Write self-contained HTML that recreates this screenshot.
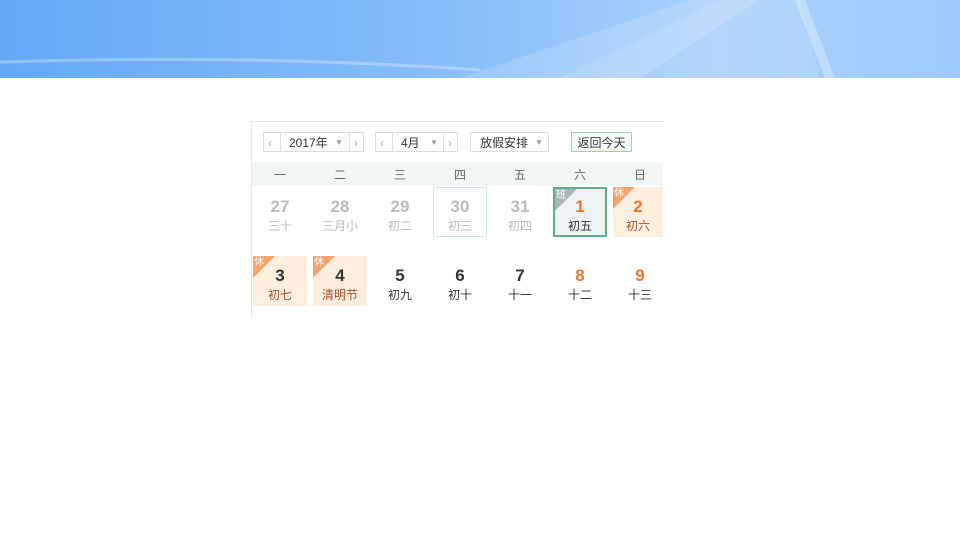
<!DOCTYPE html>
<html><head><meta charset="utf-8"><style>
body{margin:0;width:960px;height:540px;background:#fff;position:relative;overflow:hidden;font-family:"Liberation Sans","Noto Sans CJK SC",sans-serif}
.banner{position:absolute;left:0;top:0;width:960px;height:78px;background:linear-gradient(90deg,#64a8f6 0%,#86bdf9 45%,#a9d1fb 75%,#9ccbfb 100%);overflow:hidden}
.a{position:absolute}
.box{position:absolute;border:1px solid #dcdcdc;height:20px;top:132px;font-size:12px;line-height:20px;color:#333;box-sizing:border-box}
.cell{position:absolute;width:54px;height:50px;text-align:center;box-sizing:border-box}
.cell b{display:block;font-size:17px;margin-top:10px;line-height:20px}
.cell span{display:block;font-size:12px;line-height:18px}
.g b{color:#bbb}.g span{color:#bbb}
.k b{color:#333}.k span{color:#333}
.o b{color:#e8772e}
.h{background:#fdeee0}
.h span{color:#a0522d}
.tag{position:absolute;left:0;top:0;width:0;height:0;border-top:22px solid #f4a46a;border-right:22px solid transparent}
.tag i{position:absolute;left:1px;top:-21px;font-size:10px;color:#fff;font-style:normal;line-height:12px}
.wd{position:absolute;top:166px;font-size:12px;color:#666;width:20px;text-align:center}
</style></head><body>
<div class="banner">
<svg width="960" height="78" style="position:absolute;left:0;top:0">
<polygon points="460,78 690,0 760,0 640,78" fill="#fff" opacity="0.15"/>
<polygon points="560,78 720,0 800,0 820,78" fill="#fff" opacity="0.12"/>
<polygon points="795,0 805,0 835,78 825,78" fill="#fff" opacity="0.3"/>
<path d="M0,62 Q250,54 480,70" stroke="#fff" stroke-width="3" fill="none" opacity="0.3"/>
</svg>
</div>
<div class="a" style="left:251px;top:121px;width:412px;height:196px;border-left:1px solid #e6e6e6;border-top:1px solid #e6e6e6"></div>
<div class="box" style="left:263px;width:101px"><span class="a" style="left:4px;color:#aaa">&lsaquo;</span><span class="a" style="left:16px;top:-1px;height:20px;border-left:1px solid #e0e0e0"></span><span class="a" style="left:25px">2017年</span><span class="a" style="left:71px;color:#999;font-size:8px">▼</span><span class="a" style="left:85px;top:-1px;height:20px;border-left:1px solid #e0e0e0"></span><span class="a" style="left:90px;color:#aaa">&rsaquo;</span></div>
<div class="box" style="left:375px;width:83px"><span class="a" style="left:4px;color:#aaa">&lsaquo;</span><span class="a" style="left:16px;top:-1px;height:20px;border-left:1px solid #e0e0e0"></span><span class="a" style="left:25px">4月</span><span class="a" style="left:54px;color:#999;font-size:8px">▼</span><span class="a" style="left:67px;top:-1px;height:20px;border-left:1px solid #e0e0e0"></span><span class="a" style="left:72px;color:#aaa">&rsaquo;</span></div>
<div class="box" style="left:470px;width:79px"><span class="a" style="left:9px">放假安排</span><span class="a" style="left:64px;color:#999;font-size:8px">▼</span></div>
<div class="box" style="left:571px;width:61px;border-color:#9fd0b0;background:#f4faf6;text-align:center">返回今天</div>
<div class="a" style="left:252px;top:162px;width:411px;height:24px;background:#f2f6f7"></div>
<div class="wd" style="left:270px">一</div><div class="wd" style="left:330px">二</div><div class="wd" style="left:390px">三</div><div class="wd" style="left:450px">四</div><div class="wd" style="left:510px">五</div><div class="wd" style="left:570px">六</div><div class="wd" style="left:630px">日</div>

<div class="cell g" style="left:253px;top:187px"><b>27</b><span>三十</span></div>
<div class="cell g" style="left:313px;top:187px"><b>28</b><span>三月小</span></div>
<div class="cell g" style="left:373px;top:187px"><b>29</b><span>初二</span></div>
<div class="cell g" style="left:433px;top:187px;border:1px solid #cde8da"><b style="margin-top:9px">30</b><span>初三</span></div>
<div class="cell g" style="left:493px;top:187px"><b>31</b><span>初四</span></div>
<div class="cell k o" style="left:553px;top:187px;border:2px solid #5fae84;background:#eef2f4"><div class="tag" style="border-top-color:#aab4bb"><i>班</i></div><b style="margin-top:8px">1</b><span>初五</span></div>
<div class="cell o h" style="left:613px;top:187px;width:50px"><div class="tag"><i>休</i></div><b>2</b><span>初六</span></div>

<div class="cell k h" style="left:253px;top:256px"><div class="tag"><i>休</i></div><b>3</b><span>初七</span></div>
<div class="cell k h" style="left:313px;top:256px"><div class="tag"><i>休</i></div><b>4</b><span>清明节</span></div>
<div class="cell k" style="left:373px;top:256px"><b>5</b><span>初九</span></div>
<div class="cell k" style="left:433px;top:256px"><b>6</b><span>初十</span></div>
<div class="cell k" style="left:493px;top:256px"><b>7</b><span>十一</span></div>
<div class="cell k o" style="left:553px;top:256px"><b>8</b><span>十二</span></div>
<div class="cell k o" style="left:613px;top:256px"><b>9</b><span>十三</span></div>
</body></html>
